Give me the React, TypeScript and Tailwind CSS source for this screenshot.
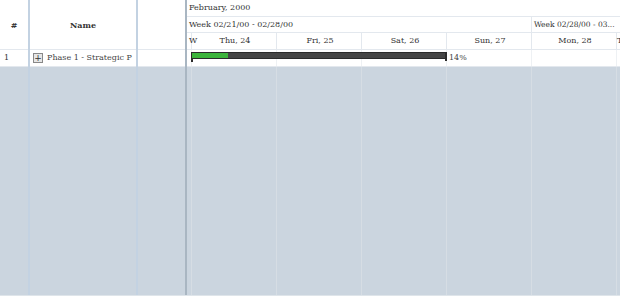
const font = "font-['DejaVu_Serif','Liberation_Serif',serif]";

const days = [
  { label: "W", width: "w-[5px]", align: "justify-start pl-[2px]" },
  { label: "Thu, 24", width: "w-[85px]", align: "justify-center pl-[2px]" },
  { label: "Fri, 25", width: "w-[85px]", align: "justify-center pl-[2px]" },
  { label: "Sat, 26", width: "w-[85px]", align: "justify-center pl-[2px]" },
  { label: "Sun, 27", width: "w-[85px]", align: "justify-center pl-[2px]" },
  { label: "Mon, 28", width: "w-[85px]", align: "justify-center pl-[2px]" },
  { label: "Tue, 29", width: "w-[85px]", align: "justify-start pl-0" },
];

function LeftGrid() {
  return (
    <div className="flex h-full w-[185px] shrink-0">
      <div className="flex w-[30px] shrink-0 flex-col border-r-2 border-[#c3d2e2]">
        <div className="flex h-[50px] items-center justify-center border-b border-[#e3e8ee] bg-white text-[8px] font-bold text-[#333]">
          #
        </div>
        <div className="flex h-[16px] items-center bg-white pl-[4px] text-[8px] text-[#333]">1</div>
        <div className="flex-1 border-t border-[#e3e8ee] bg-[#cbd5df]" />
      </div>
      <div className="flex w-[108px] shrink-0 flex-col border-r-2 border-[#c3d2e2]">
        <div className="flex h-[50px] items-center justify-center border-b border-[#e3e8ee] bg-white text-[8px] font-bold text-[#333]">
          Name
        </div>
        <div className="flex h-[16px] items-center gap-[4px] overflow-hidden whitespace-nowrap bg-white pl-[3px] text-[8px] text-[#444]">
          <span className="flex h-[10px] w-[10px] shrink-0 items-center justify-center border border-[#888] bg-[#e6e6e6] text-[9px] leading-none text-[#333]">
            +
          </span>
          Phase 1 - Strategic P
        </div>
        <div className="flex-1 border-t border-[#e3e8ee] bg-[#cbd5df]" />
      </div>
      <div className="flex flex-1 flex-col">
        <div className="h-[50px] border-b border-[#e3e8ee] bg-white" />
        <div className="h-[16px] bg-white" />
        <div className="flex-1 border-t border-[#e3e8ee] bg-[#cbd5df]" />
      </div>
    </div>
  );
}

function Timeline() {
  return (
    <div className="flex h-full min-w-0 flex-1 flex-col overflow-hidden">
      <div className="flex h-[17px] items-center border-b border-[#e3e8ee] bg-white pl-[2px] text-[8px] text-[#333]">
        February, 2000
      </div>
      <div className="flex h-[16px] border-b border-[#e3e8ee] bg-white text-[8px] text-[#333]">
        <div className="flex w-[345px] shrink-0 items-center border-r border-[#e3e8ee] pl-[2px]">
          Week 02/21/00 - 02/28/00
        </div>
        <div className="flex w-[86px] shrink-0 items-center whitespace-nowrap pl-[2px] text-[7.5px]">Week 02/28/00 - 03...</div>
      </div>
      <div className="flex h-[17px] border-b border-[#e3e8ee] bg-white text-[8px] text-[#333]">
        {days.map((d) => (
          <div
            key={d.label}
            className={`flex ${d.width} shrink-0 items-center ${d.align} overflow-visible whitespace-nowrap border-r border-[#e3e8ee]`}
          >
            {d.label}
          </div>
        ))}
      </div>
      <div className="relative flex h-[16px] bg-white">
        {days.map((d) => (
          <div key={d.label} className={`${d.width} shrink-0 border-r border-[#eef1f4]`} />
        ))}
        <div className="absolute left-[4px] top-[2px] flex h-[7px] w-[256px] border border-[#2b2b2b] bg-[#454545]">
          <div className="h-full w-[36px] bg-[#3cb43c]" />
        </div>
        <div className="absolute left-[4px] top-[8px] h-[4px] w-[2px] bg-[#2b2b2b]" />
        <div className="absolute left-[258px] top-[2px] h-[9px] w-[2px] bg-[#2b2b2b]" />
        <div className="absolute left-[262px] top-0 flex h-full items-center text-[8px] text-[#444]">14%</div>
      </div>
      <div className="flex flex-1 border-t border-[#e3e8ee] bg-[#cbd5df]">
        {days.map((d) => (
          <div key={d.label} className={`${d.width} shrink-0 border-r border-[#d6dde4]`} />
        ))}
      </div>
    </div>
  );
}

export default function App() {
  return (
    <div className={`${font} h-[300px] w-[620px] bg-white`}>
      <div className="flex h-[296px] border-b border-[#dfe5ea]">
        <LeftGrid />
        <div className="w-[2px] shrink-0 bg-[#a9b6c2]" />
        <Timeline />
      </div>
    </div>
  );
}
